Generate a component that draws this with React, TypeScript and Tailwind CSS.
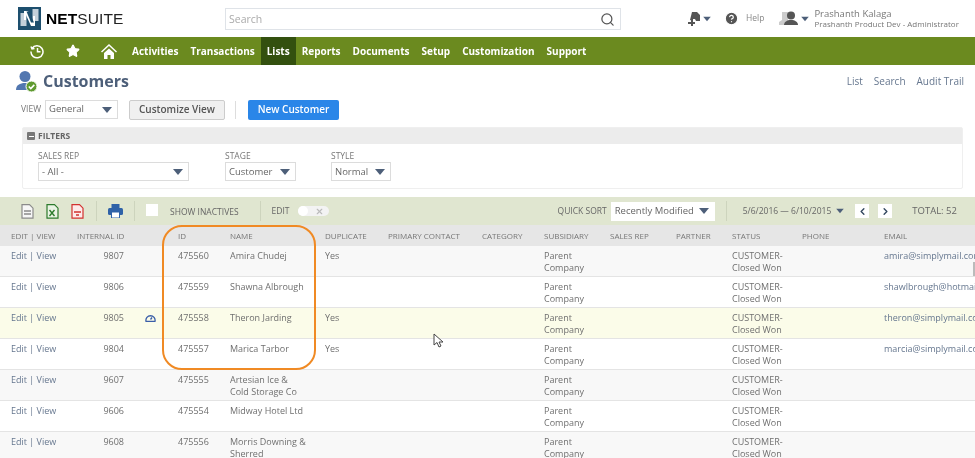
import { ChevronLeft, ChevronRight, CircleHelp, Search, Star, X } from "lucide-react";

const rows = [
  { id: "9807", num: "475560", name: "Amira Chudej", dup: "Yes", email: "amira@simplymail.com" },
  { id: "9806", num: "475559", name: "Shawna Albrough", dup: "", email: "shawlbrough@hotmail.com" },
  { id: "9805", num: "475558", name: "Theron Jarding", dup: "Yes", email: "theron@simplymail.com", hot: true },
  { id: "9804", num: "475557", name: "Marica Tarbor", dup: "Yes", email: "marcia@simplymail.com" },
  { id: "9607", num: "475555", name: "Artesian Ice &\nCold Storage Co", dup: "" },
  { id: "9606", num: "475554", name: "Midway Hotel Ltd", dup: "" },
  { id: "9608", num: "475556", name: "Morris Downing &\nSherred", dup: "" },
];

const navItems = ["Activities", "Transactions", "Lists", "Reports", "Documents", "Setup", "Customization", "Support"];

const columns = "grid grid-cols-[66px_101px_52px_95px_63px_94px_62px_66px_66px_56px_70px_82px_91px] pl-[11px]";

function Caret({ className = "" }: { className?: string }) {
  return <span className={"h-0 w-0 border-x-[5px] border-t-[6px] border-x-transparent border-t-[#4d5f79] " + className} />;
}

function Select({ label, width }: { label: string; width: string }) {
  return (
    <div className={"flex h-[19px] items-center justify-between whitespace-nowrap border border-[#dcdcdc] bg-white pl-[3px] pr-[5px] text-[9.500px] text-[#666] " + width}>
      <span>{label}</span>
      <Caret />
    </div>
  );
}

function Logo() {
  return (
    <svg width="23" height="23" viewBox="0 0 23 23">
      <rect width="23" height="23" fill="#1d4f6e" />
      <rect x="2.500" y="6" width="6" height="13" fill="#c3d0da" />
      <rect x="14.500" y="2" width="6" height="12" fill="#c3d0da" />
      <path d="M6 4h4l5 11V9h2v10h-4L8 8v5H6z" fill="#fff" />
      <path d="M8.500 4.500h2.500l5 11h-3z" fill="#1d4f6e" />
    </svg>
  );
}

function CustomerIcon() {
  return (
    <svg width="22" height="24" viewBox="0 0 22 24">
      <circle cx="9" cy="6.500" r="5.500" fill="#5277b0" />
      <path d="M0 20c0-5 4-7 9-7s8 2 8 7z" fill="#5277b0" />
      <circle cx="15.500" cy="16.500" r="5.500" fill="#5f9a30" stroke="#fff" />
      <path d="M12.800 16.500l2 2 3.500-3.600" fill="none" stroke="#fff" strokeWidth="1.600" />
    </svg>
  );
}

function PageIcon({ stroke, fill, mark }: { stroke: string; fill: string; mark: string }) {
  return (
    <svg width="13" height="15" viewBox="0 0 13 15">
      <path d="M1 .700h7.500L12 4.200v10H1z" fill={fill} stroke={stroke} strokeWidth="1.200" />
      <path d={mark} fill="none" stroke={stroke} strokeWidth="1.400" />
    </svg>
  );
}

function Cursor() {
  return (
    <svg className="absolute left-[433px] top-[333px]" width="12" height="15" viewBox="0 0 12 15">
      <path d="M1 1v11l3-2.500 2 4.500 2-1-2-4h4z" fill="#fff" stroke="#444" />
    </svg>
  );
}

export default function App() {
  return (
    <div className="relative h-[458px] w-[975px] overflow-hidden bg-white font-['Open_Sans',sans-serif] text-[#6f6f6f] blur-[0.3px]">
      {/* top bar */}
      <div className="flex h-[37px] items-center whitespace-nowrap">
        <div className="ml-[18px] flex w-[207px] items-center gap-[5px]">
          <Logo />
          <span className="text-[15.500px] font-['Liberation_Sans',sans-serif] tracking-[0.1px] text-[#222]">
            <b className="text-black">NET</b>SUITE
          </span>
        </div>
        <div className="mt-[1px] flex h-[22px] w-[396px] items-center justify-between border border-[#dfe3e8] pl-[3px] pr-[5px] text-[10.500px] text-[#aaa]">
          <span className="pt-[1px]">Search</span>
          <Search size={15} className="text-[#555]" />
        </div>
        <svg className="ml-[66px]" width="14" height="14" viewBox="0 0 14 14" fill="#555">
          <path d="M5 0h5l3 3v6H9L8 7H6v2L3 8z" />
          <path d="M4 8h2v2h2v2H6v2H4v-2H1v-2h3z" />
        </svg>
        <Caret className="ml-[1px] scale-75" />
        <div className="ml-[12px] flex items-center">
          <CircleHelp size={15} fill="#555" className="text-white" />
          <span className="ml-[7px] text-[8.500px] text-[#888]">Help</span>
        </div>
        <svg className="ml-[15px]" width="20" height="15" viewBox="0 0 20 15">
          <path d="M3 1h6v8l2 2v3H0v-3l3-2z" fill="#ccc" />
          <circle cx="12" cy="4.500" r="4" fill="#555" />
          <path d="M5 14c0-3 3-5 7-5s7 2 7 5z" fill="#555" />
        </svg>
        <Caret className="ml-[1px] scale-75" />
        <div className="ml-[4px] flex flex-col text-[#777]">
          <span className="text-[9.500px] leading-[10px]">Prashanth Kalaga</span>
          <span className="text-[8px] leading-[9px]">Prashanth Product Dev - Administrator</span>
        </div>
      </div>

      {/* nav */}
      <div className="flex h-[28px] items-center bg-[#6b8a1f] text-white">
        <svg className="ml-[30px]" width="15" height="15" viewBox="0 0 15 15" fill="none" stroke="#fff" strokeWidth="1.500">
          <path d="M2 4.500a6 6 0 1 1-1 3M7.500 4v3.800h3M1 2.500l1 2.500 2.500-.5" />
        </svg>
        <Star size={14} fill="#fff" className="ml-[21px]" />
        <svg className="ml-[21px]" width="16" height="15" viewBox="0 0 16 15" fill="#fff">
          <path d="M8 0L0 7.500l1 1L8 2l7 6.500 1-1zM3 9l5-4.500L13 9v6h-3.500v-4h-3v4H3z" />
        </svg>
        <div className="ml-[9px] flex h-full">
          {navItems.map((item) => (
            <span key={item} className={"flex items-center px-[6px] text-[10px] font-bold " + (item === "Lists" ? "bg-[#33500f]" : "")}>
              {item}
            </span>
          ))}
        </div>
      </div>

      {/* title */}
      <div className="flex h-[33px] items-center pl-[16px] pr-[11px]">
        <CustomerIcon />
        <h1 className="ml-[5px] pb-[2px] text-[16px] font-bold text-[#4d5f79]">Customers</h1>
        <div className="ml-auto flex gap-[11px] text-[10px] text-[#66778f]">
          <span>List</span>
          <span>Search</span>
          <span>Audit Trail</span>
        </div>
      </div>

      {/* view row */}
      <div className="flex h-[23px] items-center pl-[21px]">
        <span className="mr-[4px] text-[8.500px] text-[#777]">VIEW</span>
        <Select label="General" width="w-[73px]" />
        <button className="ml-[11px] h-[20px] w-[96px] rounded-[2px] border border-[#ccc] bg-[#f0f0f0] text-[10px] font-semibold text-[#555]">Customize View</button>
        <div className="ml-[10px] h-[18px] w-px bg-[#ddd]" />
        <button className="ml-[12px] h-[20px] w-[91px] rounded-[2px] bg-[#2a86e8] text-[10px] font-semibold text-white">New Customer</button>
      </div>

      {/* filters */}
      <div className="ml-[22px] mr-[12px] mt-[6px] h-[62px] rounded-[2px] border border-[#efefef]">
        <div className="flex h-[16px] items-center gap-[3px] bg-[#ececec] pl-[4px] text-[8.500px] font-bold text-[#666]">
          <span className="flex h-[8px] w-[8px] items-center justify-center rounded-[1px] bg-[#777]">
            <span className="h-px w-[5px] bg-white" />
          </span>
          FILTERS
        </div>
        <div className="flex pl-[15px] pt-[6px] text-[8.500px] leading-[12px] text-[#777]">
          <div className="w-[187px]">
            SALES REP
            <Select label="- All -" width="w-[151px]" />
          </div>
          <div className="w-[106px]">
            STAGE
            <Select label="Customer" width="w-[71px]" />
          </div>
          <div>
            STYLE
            <Select label="Normal" width="w-[60px]" />
          </div>
        </div>
      </div>

      {/* list toolbar */}
      <div className="mt-[8px] flex h-[28px] items-center whitespace-nowrap bg-[#e0e6d0] text-[8.500px] text-[#666]">
        <span className="ml-[21px] flex">
          <PageIcon stroke="#8a8a8a" fill="#f6f6f6" mark="M3 7h7M3 10h7" />
        </span>
        <span className="ml-[12px] flex">
          <PageIcon stroke="#2c7a2c" fill="#eaf3e4" mark="M3.500 6l5 6M8.500 6l-5 6" />
        </span>
        <span className="ml-[12px] flex">
          <PageIcon stroke="#d2312f" fill="#fdeaea" mark="M3 8h7M5 11h3" />
        </span>
        <div className="ml-[12px] h-[20px] w-px bg-[#cdd4bd]" />
        <svg className="ml-[11px]" width="15" height="14" viewBox="0 0 15 14">
          <rect x="3.500" y="0" width="8" height="4" fill="#2f62a8" />
          <rect x="0" y="4" width="15" height="7" rx="1.500" fill="#2f62a8" />
          <rect x="3.500" y="8" width="8" height="6" fill="#fff" stroke="#2f62a8" />
        </svg>
        <div className="ml-[11px] h-[20px] w-px bg-[#cdd4bd]" />
        <span className="ml-[11px] mb-[3px] h-[12px] w-[12px] bg-white" />
        <span className="ml-[12px] mt-[2px]">SHOW INACTIVES</span>
        <div className="ml-[21px] h-[20px] w-px bg-[#cdd4bd]" />
        <span className="ml-[11px]">EDIT</span>
        <span className="ml-[8px] flex h-[10px] w-[31px] items-center justify-between rounded-full bg-[#f3f3f3] pr-[5px]">
          <span className="h-[10px] w-[10px] rounded-full bg-white" />
          <X size={9} strokeWidth={3} className="text-[#bbb]" />
        </span>
        <span className="ml-[229px]">QUICK SORT</span>
        <Select label="Recently Modified" width="ml-[4px] w-[104px] border-transparent pr-[3px]" />
        <div className="ml-[11px] h-[20px] w-px bg-[#cdd4bd]" />
        <span className="ml-[16px]">5/6/2016 — 6/10/2015</span>
        <Caret className="ml-[4px] scale-75" />
        <span className="ml-[10px] flex h-[14px] w-[14px] items-center justify-center bg-white">
          <ChevronLeft size={11} strokeWidth={3} className="text-[#33475f]" />
        </span>
        <span className="ml-[9px] flex h-[14px] w-[14px] items-center justify-center bg-white">
          <ChevronRight size={11} strokeWidth={3} className="text-[#33475f]" />
        </span>
        <span className="ml-[20px] text-[9.500px]">TOTAL: 52</span>
      </div>

      {/* table */}
      <div className={columns + " h-[21px] items-center bg-[#e6e6e6] pt-[1px] text-[8px] text-[#777]"}>
        <span>EDIT | VIEW</span>
        <span>INTERNAL ID</span>
        <span>ID</span>
        <span>NAME</span>
        <span>DUPLICATE</span>
        <span>PRIMARY CONTACT</span>
        <span>CATEGORY</span>
        <span>SUBSIDIARY</span>
        <span>SALES REP</span>
        <span>PARTNER</span>
        <span>STATUS</span>
        <span>PHONE</span>
        <span>EMAIL</span>
      </div>
      {rows.map((r, i) => (
        <div
          key={r.id}
          className={columns + " h-[31px] overflow-hidden border-b border-[#e4e4e4] pt-[3.500px] text-[9px] leading-[12px] " + (r.hot ? "bg-[#fbfce9]" : i % 2 === 0 ? "bg-[#f8f8f8]" : "bg-white")}
        >
          <span className="text-[#66778f]">Edit | View</span>
          <span className="flex">
            <span className="w-[47px] text-right">{r.id}</span>
            {r.hot && (
              <svg className="ml-[21px] mt-[2px]" width="11" height="8" viewBox="0 0 11 8" fill="none" stroke="#3a5ea8" strokeWidth="1.300">
                <path d="M1 7.300a4.600 4.600 0 1 1 9 0zM5.500 5.500l1.500-2" />
              </svg>
            )}
          </span>
          <span>{r.num}</span>
          <span className="whitespace-pre-line">{r.name}</span>
          <span>{r.dup}</span>
          <span />
          <span />
          <span className="pr-[20px]">Parent Company</span>
          <span />
          <span />
          <span className="pr-[10px]">CUSTOMER-Closed Won</span>
          <span />
          <span className="whitespace-nowrap text-[#66778f]">{r.email}</span>
        </div>
      ))}

      {/* annotation over the table */}
      <div className="absolute left-[162px] top-[225px] h-[145px] w-[154px] rounded-[20px] border-2 border-[#f08a24]" />
      <Cursor />
      <div className="absolute left-[973px] top-[262px] h-[14px] w-[2px] bg-[#bbb]" />
    </div>
  );
}
